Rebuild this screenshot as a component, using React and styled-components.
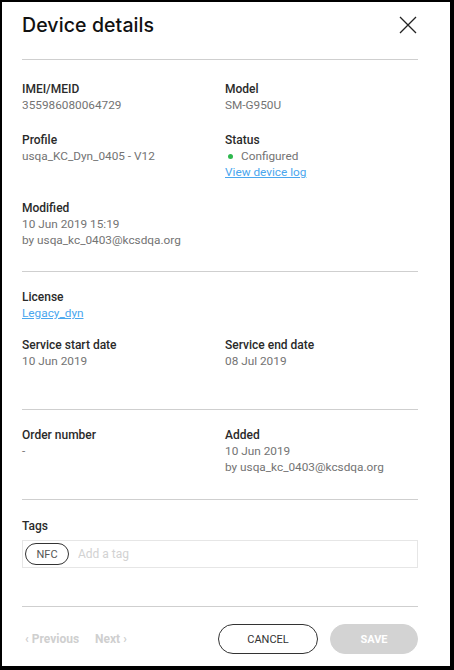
import styled, { createGlobalStyle } from "styled-components";

const GlobalStyle = createGlobalStyle`
  html, body {
    margin: 0;
    padding: 0;
    background: #000;
  }
  body {
    font-family: Roboto, "Noto Sans", Arial, sans-serif;
  }
`;

const Panel = styled.div`
  box-sizing: border-box;
  width: 448px;
  height: 664px;
  margin: 2px 4px 4px 2px;
  background: #fff;
  padding: 0 32px 0 20px;
  display: flex;
  flex-direction: column;
`;

const Header = styled.div`
  display: flex;
  align-items: center;
  justify-content: space-between;
  height: 46px;
  border-bottom: 1px solid #cfcfcf;
  padding-bottom: 11px;
`;

const Title = styled.h1`
  margin: 0;
  font-family: Inter, Roboto, sans-serif;
  font-size: 19.5px;
  font-weight: 500;
  color: #111;
  letter-spacing: 0.1px;
`;

const Close = styled.button`
  border: 0;
  background: none;
  padding: 0;
  width: 20px;
  height: 20px;
  display: flex;
  align-items: center;
  justify-content: center;
  cursor: pointer;
`;

const Section = styled.div`
  padding-top: ${(p) => p.$top}px;
  padding-bottom: ${(p) => p.$bottom}px;
  border-bottom: 1px solid #cfcfcf;
  display: grid;
  grid-template-columns: 203px 1fr;
  row-gap: ${(p) => p.$gap || 18}px;
`;

const Field = styled.div`
  display: flex;
  flex-direction: column;
  grid-column: ${(p) => (p.$wide ? "1 / -1" : "auto")};
`;

const Label = styled.div`
  font-size: 12px;
  line-height: 16px;
  font-weight: 500;
  color: #2a2a2a;
`;

const Value = styled.div`
  font-size: 11.8px;
  line-height: 16px;
  color: #737373;
  display: flex;
  align-items: center;
`;

const Link = styled.a`
  font-size: 11.8px;
  line-height: 17px;
  color: #4aa6ee;
  text-decoration: underline;
  cursor: pointer;
  align-self: flex-start;
`;

const Dot = styled.span`
  width: 5px;
  height: 5px;
  border-radius: 50%;
  background: #2eb84e;
  margin: 1px 8px 0 3px;
`;

const TagBox = styled.div`
  margin-top: 6px;
  height: 28px;
  box-sizing: border-box;
  border: 1px solid #e6e6e6;
  display: flex;
  align-items: center;
  padding-left: 2px;
  gap: 9px;
`;

const Chip = styled.span`
  box-sizing: border-box;
  height: 22px;
  width: 44px;
  border: 1px solid #333;
  border-radius: 11px;
  display: flex;
  align-items: center;
  justify-content: center;
  font-size: 11px;
  color: #555;
`;

const TagInput = styled.input`
  border: 0;
  outline: none;
  font-family: inherit;
  font-size: 12px;
  color: #333;
  flex: 1;
  padding: 0;
  &::placeholder {
    color: #d2d2d2;
  }
`;

const Footer = styled.div`
  display: flex;
  align-items: center;
  padding-top: 17px;
`;

const Pager = styled.button`
  border: 0;
  background: none;
  padding: 0;
  font-family: inherit;
  font-size: 12px;
  font-weight: 700;
  color: #cfcfcf;
  margin-left: ${(p) => p.$ml || 0}px;
`;

const Actions = styled.div`
  margin-left: auto;
  display: flex;
  gap: 12px;
`;

const Button = styled.button`
  box-sizing: border-box;
  height: 30px;
  width: ${(p) => p.$w}px;
  border-radius: 15px;
  font-family: inherit;
  font-size: 11px;
  font-weight: ${(p) => (p.$primary ? 700 : 400)};
  border: 1px solid ${(p) => (p.$primary ? "#d3d3d3" : "#333")};
  background: ${(p) => (p.$primary ? "#d3d3d3" : "#fff")};
  color: ${(p) => (p.$primary ? "#fff" : "#333")};
`;

export default function App() {
  return (
    <>
      <GlobalStyle />
      <Panel>
        <Header>
          <Title>Device details</Title>
          <Close aria-label="Close">
            <svg width="18" height="18" viewBox="0 0 18 18">
              <path d="M1 1 L17 17 M17 1 L1 17" stroke="#222" strokeWidth="1.3" fill="none" />
            </svg>
          </Close>
        </Header>

        <Section $top={21} $bottom={23} $gap={19}>
          <Field>
            <Label>IMEI/MEID</Label>
            <Value>355986080064729</Value>
          </Field>
          <Field>
            <Label>Model</Label>
            <Value>SM-G950U</Value>
          </Field>
          <Field>
            <Label>Profile</Label>
            <Value>usqa_KC_Dyn_0405 - V12</Value>
          </Field>
          <Field>
            <Label>Status</Label>
            <Value>
              <Dot />
              Configured
            </Value>
            <Link>View device log</Link>
          </Field>
          <Field $wide>
            <Label>Modified</Label>
            <Value>10 Jun 2019 15:19</Value>
            <Value>by usqa_kc_0403@kcsdqa.org</Value>
          </Field>
        </Section>

        <Section $top={17} $bottom={40} $gap={15}>
          <Field $wide>
            <Label>License</Label>
            <Link>Legacy_dyn</Link>
          </Field>
          <Field>
            <Label>Service start date</Label>
            <Value>10 Jun 2019</Value>
          </Field>
          <Field>
            <Label>Service end date</Label>
            <Value>08 Jul 2019</Value>
          </Field>
        </Section>

        <Section $top={17} $bottom={24}>
          <Field>
            <Label>Order number</Label>
            <Value>-</Value>
          </Field>
          <Field>
            <Label>Added</Label>
            <Value>10 Jun 2019</Value>
            <Value>by usqa_kc_0403@kcsdqa.org</Value>
          </Field>
        </Section>

        <Section $top={18} $bottom={38}>
          <Field $wide>
            <Label>Tags</Label>
            <TagBox>
              <Chip>NFC</Chip>
              <TagInput placeholder="Add a tag" />
            </TagBox>
          </Field>
        </Section>

        <Footer>
          <Pager $ml={3}>‹ Previous</Pager>
          <Pager $ml={16}>Next ›</Pager>
          <Actions>
            <Button $w={100}>CANCEL</Button>
            <Button $w={88} $primary>SAVE</Button>
          </Actions>
        </Footer>
      </Panel>
    </>
  );
}
